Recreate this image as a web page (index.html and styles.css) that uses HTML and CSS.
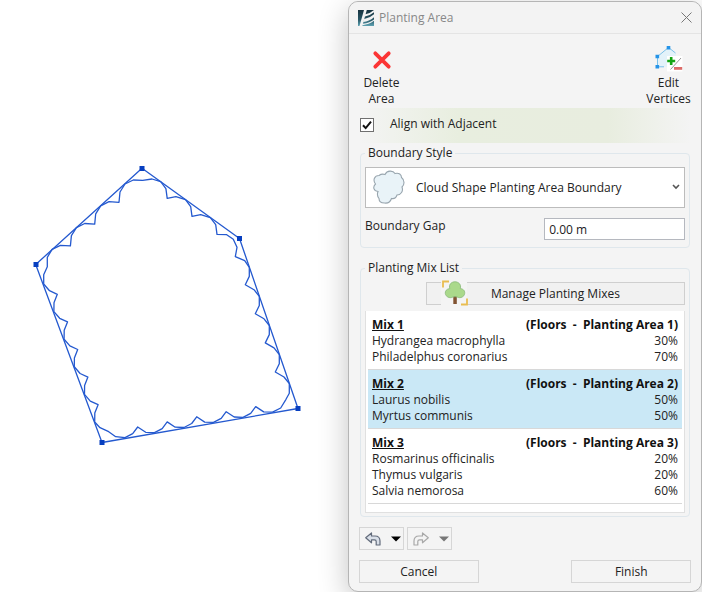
FILE: index.html
```html
<!DOCTYPE html>
<html lang="en">
<head>
<meta charset="utf-8">
<title>Planting Area</title>
<link rel="stylesheet" href="styles.css">
</head>
<body>
<main class="workspace">
  <div class="canvas">
    <svg class="drawing" viewBox="0 0 348 592" role="img" aria-label="Planting area outline">
      <g fill="none" stroke="#2459cf" stroke-width="1.3" stroke-linejoin="round">
        <path d="M142 168.300L239.500 238.500 298 408.500 102 442.500 35.700 264.500Z"/>
        <path d="M160.700 181.700L152 179L142.700 180.300L133.300 180L125 184
          l-5 8l-1 10.300l-10-.6l-8.300 4.100
          l-5 8l-1 10.300l-10-.6l-8.300 4.100
          l-5 8l-1 10.300l-10-.6l-8.300 4.100
          L47.300 257.300V266.700L43.700 274.700V284
          l5.800 6.700l7.800 3.600l-3.300 8.400l-.1 8.900
          l5.800 6.700l7.800 3.600l-3.300 8.400l-.1 8.900
          l5.800 6.700l7.800 3.600l-3.300 8.400l-.1 8.900
          l5.800 6.700l7.800 3.600l-3.300 8.400l-.1 8.900
          l5.800 6.700l7.800 3.600l-3.300 8.400l-.1 8.900
          L100 427.700L108.700 431.700L115.700 436.700L125 437.700
          l7.700-4l5-6.700l8 5.300l8.800.3
          l7.700-4l5-6.700l8 5.300l8.800.3
          l7.700-4l5-6.700l8 5.300l8.800.3
          l7.700-4l5-6.700l8 5.300l8.800.3
          l7.700-4l5-6.700l8 5.300l8.800.3
          L280.700 408L286 399.300L289.300 393.300V383.700
          l-5.300-6.700l-8.700-5l4-8.300v-9.100
          l-5.300-6.700l-8.700-5l4-8.300v-9.100
          l-5.300-6.700l-8.700-5l4-8.300v-9.100
          l-5.300-6.700l-8.700-5l4-8.300v-9.100
          L244.700 260.700L235.300 256.700L237 247.300L233.300 239.300L226.700 234.700L217 234.300L215.700 224.700L210.300 217.700
          l-9.600-3l-8.700 1.600l-1.300-9.600l-5.200-7
          l-9.600-3l-8.700 1.600l-1.300-9.600Z"/>
      </g>
      <g fill="#073fc0">
        <path d="M139.500 166h5v5h-5zM237 236h5v5h-5zM295.500 406h5v5h-5zM99.500 440h5v5h-5zM33.500 262h5v5h-5z"/>
      </g>
    </svg>
  </div>

  <form class="dialog" aria-labelledby="dialog-title">
    <header class="titlebar">
      <svg class="app-logo" viewBox="0 0 16 16" aria-hidden="true">
        <defs><linearGradient id="logo" x1="0" y1="0" x2="0" y2="1"><stop offset="0" stop-color="#17323f"/><stop offset=".6" stop-color="#285766"/><stop offset="1" stop-color="#5fa3b3"/></linearGradient></defs>
        <path fill="url(#logo)" d="M0 0h16v16H0z"/>
        <path fill="#f3f3f3" d="M6 0h2.800L4.300 16H1.500zM7.500 4.200Q12 3.500 16 0v2.200Q12 5.500 7 6.500zM6.300 9Q12 8 16 4.200v3Q11 11.500 5.500 12zM5 13.700Q12 13 16 9.500v1.300Q11 14.500 4.500 15.200z"/>
      </svg>
      <h1 class="title" id="dialog-title">Planting Area</h1>
      <button class="close" type="button" aria-label="Close">
        <svg viewBox="0 0 11 11" width="11" height="11" aria-hidden="true"><path d="M.5.5l10 10M10.500.5l-10 10" stroke="#777" stroke-width="1" fill="none"/></svg>
      </button>
    </header>

    <div class="content">
      <div class="toolbar">
        <button class="tool" type="button">
          <svg viewBox="0 0 28 28" aria-hidden="true"><path d="M7.300 7.300l13.400 13.400M20.700 7.300l-13.400 13.400" stroke="#fb3535" stroke-width="3.800" stroke-linecap="round" fill="none"/></svg>
          <span>Delete<br>Area</span>
        </button>
        <button class="tool" type="button">
          <svg viewBox="0 0 28 28" aria-hidden="true">
            <path fill="#e3f2fa" d="M13.500 2L3 10.500v10.300h18V8z"/>
            <path fill="none" stroke="#78c0ea" d="M9 20.800H2.500V10.500L13.500 1.500l7 5.500"/>
            <path fill="#2493e8" d="M11.700 0h3.600v3.400h-3.600zM.5 8.700h3.600v3.600H.5zM.5 19h3.600v3.600H.5z"/>
            <path fill="#fff" d="M12 10h15.500v15.500H12z"/>
            <path stroke="#999" d="M15.500 23.500L26 12"/>
            <path stroke="#15a515" stroke-width="2.600" d="M12.200 15h8M16.200 11v8"/>
            <path fill="#dc6b68" d="M19 21h8.200v2.800H19z"/>
          </svg>
          <span>Edit<br>Vertices</span>
        </button>
      </div>

      <label class="align">
        <span class="check">
          <input type="checkbox" checked>
          <svg class="tick" viewBox="0 0 14 14" aria-hidden="true"><path d="M3 7.200l2.700 2.900L11 3.700" fill="none" stroke="#111" stroke-width="2"/></svg>
        </span>
        Align with Adjacent
      </label>

      <fieldset class="group">
        <legend>Boundary Style</legend>
        <div class="picker">
          <select aria-label="Boundary Style"><option>Cloud Shape Planting Area Boundary</option></select>
          <svg class="cloud" viewBox="0 0 34 34" aria-hidden="true"><path fill="#e9f3f8" stroke="#98a5ae" stroke-width="1.100" d="M13 4.500C15 .2 21 .2 23 3.500c4-1 6.500 1 6.500 4C33 10 32.500 15 30 17c1.500 4-1 8-5 8-1 3-3.500 4-5.500 3.500C18.500 31.500 16 33.500 12.500 33 9 33 7 31 7 28.500 5 26 5 24 6 21.500 1.500 21 .5 17 3.500 14 .5 10 2.500 5.500 7 5.500 9 4 11.500 4 13 4.500z"/></svg>
          <svg class="chevron" viewBox="0 0 8 6" aria-hidden="true"><path d="M1 1l3 3 3-3" fill="none" stroke="#555" stroke-width="1.600"/></svg>
        </div>
        <div class="gap-row">
          <label for="gap">Boundary Gap</label>
          <input class="gap-input" id="gap" type="text" value="0.00 m">
        </div>
      </fieldset>

      <fieldset class="group">
        <legend>Planting Mix List</legend>
        <button class="manage" type="button">
          <svg class="tree" viewBox="0 0 34 26" aria-hidden="true">
            <path fill="#f4f4f4" d="M0 0h26v26H0z"/>
            <path fill="none" stroke="#e9bd51" stroke-width="1.800" d="M2 7.500V1.500h6M26 18.500v6h-6"/>
            <path fill="#815332" d="M12.300 16h3.500v8h-3.500z"/>
            <path fill="#aad98b" stroke="#88b777" stroke-width=".8" d="M8.800 8.500C7.500 4.500 10.500 1.800 14 1.800s6.500 2.700 5.300 6.700c3.500.5 4.700 2.800 4.400 5-.4 3.500-4.500 5-7.200 3.700-1.700-.8-3.200-.8-4.900 0-2.800 1.300-6.800-.2-7.300-3.700-.3-2.500 1.200-4.500 4.500-5z"/>
          </svg>
          Manage Planting Mixes
        </button>
        <div class="mixes">
          <table class="mix">
            <thead><tr><th scope="col"><span class="mix-name">Mix 1</span></th><th scope="col">(Floors  -  Planting Area 1)</th></tr></thead>
            <tbody>
              <tr><td>Hydrangea macrophylla</td><td>30%</td></tr>
              <tr><td>Philadelphus coronarius</td><td>70%</td></tr>
            </tbody>
          </table>
          <table class="mix selected">
            <thead><tr><th scope="col"><span class="mix-name">Mix 2</span></th><th scope="col">(Floors  -  Planting Area 2)</th></tr></thead>
            <tbody>
              <tr><td>Laurus nobilis</td><td>50%</td></tr>
              <tr><td>Myrtus communis</td><td>50%</td></tr>
            </tbody>
          </table>
          <table class="mix">
            <thead><tr><th scope="col"><span class="mix-name">Mix 3</span></th><th scope="col">(Floors  -  Planting Area 3)</th></tr></thead>
            <tbody>
              <tr><td>Rosmarinus officinalis</td><td>20%</td></tr>
              <tr><td>Thymus vulgaris</td><td>20%</td></tr>
              <tr><td>Salvia nemorosa</td><td>60%</td></tr>
            </tbody>
          </table>
        </div>
      </fieldset>

      <div class="history">
        <button class="btn split" type="button" aria-label="Undo">
          <svg viewBox="0 0 16 14" width="16" height="14" aria-hidden="true"><path d="M.7 5.800L6.500 1v3H10q5 0 5 5v4h-3.800v-3.500q0-1.700-1.700-1.700h-3v3z" fill="#d9dfe8" stroke="#626b7b" stroke-width="1.200" stroke-linejoin="round"/></svg>
          <svg viewBox="0 0 10 6" width="10" height="6" aria-hidden="true"><path d="M0 .5h10L5 5.500z" fill="#000"/></svg>
        </button>
        <button class="btn split" type="button" aria-label="Redo" disabled>
          <svg viewBox="0 0 16 14" width="16" height="14" aria-hidden="true"><path d="M15.300 5.800L9.500 1v3H6q-5 0-5 5v4h3.800v-3.500q0-1.700 1.700-1.700h3v3z" fill="#f4f4f4" stroke="#a8a8a8" stroke-width="1.200" stroke-linejoin="round"/></svg>
          <svg viewBox="0 0 10 6" width="10" height="6" aria-hidden="true"><path d="M0 .5h10L5 5.500z" fill="#777"/></svg>
        </button>
      </div>

      <footer class="actions">
        <button class="btn action" type="button">Cancel</button>
        <button class="btn action" type="submit">Finish</button>
      </footer>
    </div>
  </form>
</main>
</body>
</html>
```
FILE: styles.css
```css
* { box-sizing: border-box; }

body {
  margin: 0;
  background: #fff;
  color: #222;
  font: 12px/16px "Open Sans", "Noto Sans", sans-serif;
}

button, input, select { font: inherit; color: inherit; }
button { padding: 0; }
svg { display: block; flex: none; }

.workspace {
  display: grid;
  grid-template-columns: 348fr 354fr;
  align-items: start;
  overflow: hidden;
}

.drawing { width: 100%; height: auto; }

.dialog {
  margin-top: 1px;
  border: 1px solid #b5b5b5;
  border-radius: 10px;
  background: #f4f4f4;
  box-shadow: 0 8px 30px rgba(0, 0, 0, .24);
}

.titlebar {
  display: flex;
  align-items: center;
  gap: 5px;
  height: 32px;
  padding: 0 9px;
  border-bottom: 1px solid #e4e4e4;
  border-radius: 10px 10px 0 0;
  background: #f3f3f3;
}
.app-logo { width: 16px; height: 16px; }
.title {
  flex: 1;
  margin: 0;
  color: #888;
  font-size: 12px;
  font-weight: 400;
}
.close { border: 0; background: none; }

.content { padding: 0 10px 8px; }

.toolbar {
  display: flex;
  justify-content: space-between;
  padding: 12px 0 1px;
}
.tool {
  display: flex;
  flex-direction: column;
  align-items: center;
  width: 45px;
  border: 0;
  background: none;
}
.tool svg { width: 28px; height: 28px; margin-bottom: 1px; }

.align {
  display: flex;
  align-items: center;
  gap: 16px;
  height: 35px;
  margin-bottom: 2px;
  padding: 0 0 4px 1px;
  background: linear-gradient(90deg, #f4f4f4, #e8eedf 30%, #e8eddf 75%, #f4f4f4);
}
.check { position: relative; width: 14px; height: 14px; }
.check input {
  display: block;
  width: 14px;
  height: 14px;
  margin: 1px 0 0;
  border: 1px solid #707070;
  background: #fff;
  appearance: none;
}
.tick { position: absolute; inset: 1px 0 0; width: 14px; height: 14px; pointer-events: none; }
.check input:not(:checked) + .tick { display: none; }

.group {
  min-width: 0;
  margin: 0 1px 12px;
  padding: 6px 4px 7px;
  border: 1px solid #dfe7ec;
  border-radius: 4px;
}
.group legend { padding: 0 3px; }
.group + .group { margin-bottom: 10px; padding-bottom: 3px; }

.picker { position: relative; margin-bottom: 10px; }
.picker select {
  display: block;
  width: 100%;
  height: 41px;
  padding: 0 24px 0 50px;
  border: 1px solid #bcbcbc;
  border-radius: 0;
  background: #fff;
  appearance: none;
}
.cloud, .chevron { position: absolute; pointer-events: none; }
.cloud { left: 7px; top: 3px; width: 34px; height: 34px; }
.chevron { right: 5px; top: 17px; width: 8px; height: 6px; }

.gap-row { display: flex; justify-content: space-between; }
.gap-input {
  width: 44%;
  height: 22px;
  padding: 0 4px;
  border: 1px solid #b5b8bf;
  background: #fff;
}

.manage {
  position: relative;
  display: block;
  width: 81%;
  height: 23px;
  margin: 0 0 6px auto;
  border: 1px solid #cfcfcf;
  background: #f1f1f1;
}
.tree { position: absolute; left: 14px; top: -3px; width: 34px; height: 26px; }

.mixes {
  padding: 0 2px 8px;
  border: solid #e0e0e0;
  border-width: 0 1px 1px;
  background: #fff;
}
.mix {
  display: block;
  padding: 6px 4px 4px;
  border-bottom: 1px solid #d8d8d8;
}
.mix thead, .mix tbody { display: block; }
.mix tr { display: flex; justify-content: space-between; }
.mix th, .mix td { padding: 0; text-align: left; white-space: pre; }
.mix th { color: #111; font-weight: 700; }
.mix-name { text-decoration: underline; }
.mix.selected { background: #cae8f6; }

.history { display: flex; gap: 3px; margin-bottom: 10px; }
.btn {
  height: 23px;
  border: 1px solid #d6d6d6;
  background: #f4f4f4;
}
.split {
  display: flex;
  align-items: center;
  justify-content: space-between;
  width: 45px;
  padding: 0 2px 0 5px;
}
.actions { display: flex; justify-content: space-between; }
.action { width: 36%; }
```
